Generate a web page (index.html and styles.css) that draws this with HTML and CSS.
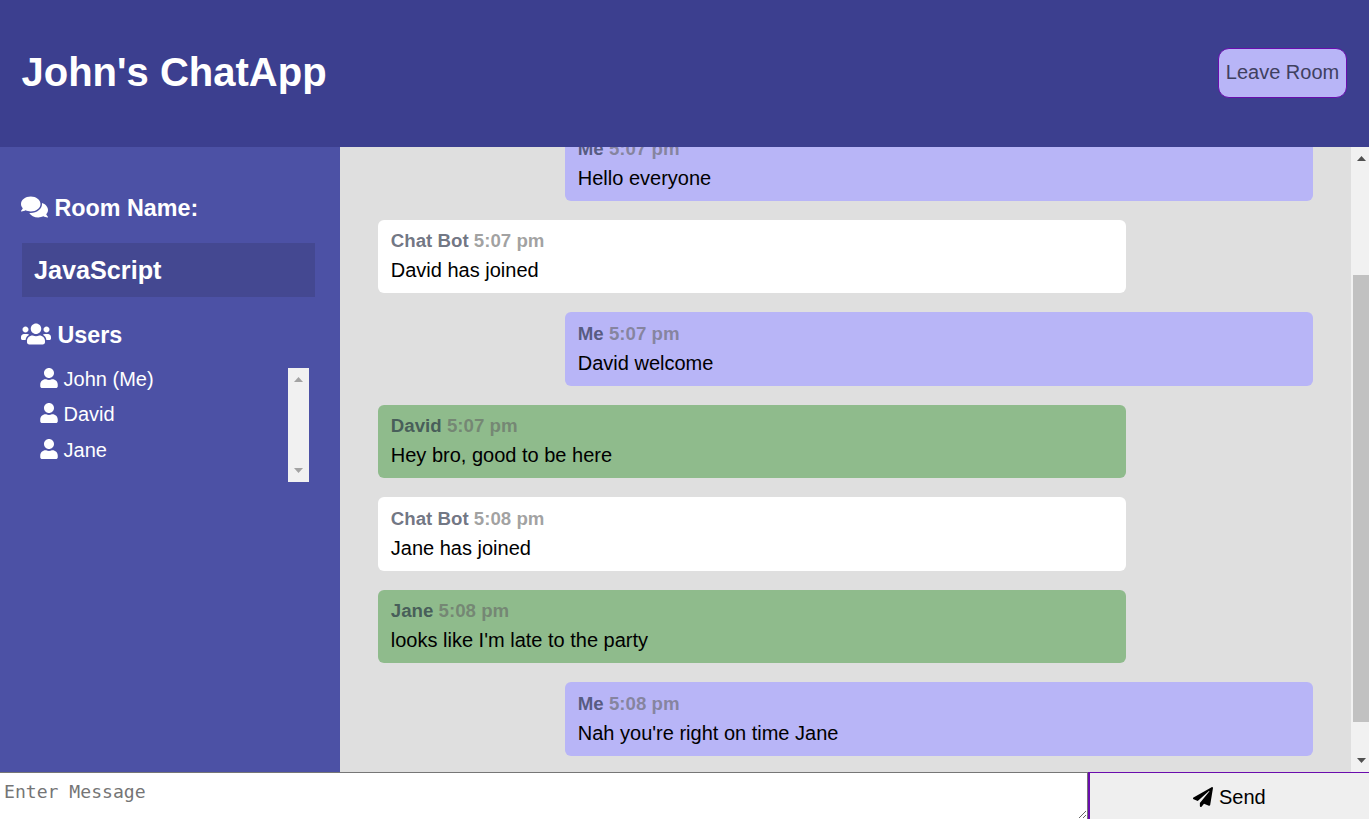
FILE: index.html
```html
<!DOCTYPE html>
<html lang="en">
<head>
<meta charset="utf-8">
<title>John's ChatApp</title>
<link rel="stylesheet" href="styles.css">
</head>
<body>
<div class="app">
  <header class="topbar">
    <h1 class="brand">John's ChatApp</h1>
    <button class="leave" type="button">Leave Room</button>
  </header>
  <main class="middle">
    <aside class="sidebar">
      <h3 class="side-title room-title"><svg class="ic ic-comments" viewBox="0 0 576 512"><path d="M416 192c0-88.4-93.1-160-208-160S0 103.6 0 192c0 34.3 14.1 65.9 38 92-13.4 30.2-35.5 54.2-35.8 54.5-2.2 2.3-2.8 5.7-1.5 8.7S4.8 352 8 352c36.6 0 66.9-12.3 88.7-25 32.2 15.7 70.3 25 111.3 25 114.9 0 208-71.6 208-160zm122 220c23.9-26 38-57.7 38-92 0-66.9-53.5-124.2-129.3-148.1.9 6.6 1.3 13.3 1.3 20.1 0 105.9-107.7 192-240 192-10.8 0-21.3-.8-31.7-1.9C207.8 439.6 281.8 480 368 480c41 0 79.1-9.2 111.3-25 21.8 12.7 52.1 25 88.7 25 3.2 0 6.1-1.9 7.3-4.8 1.3-2.9.7-6.3-1.5-8.7-.3-.3-22.4-24.2-35.8-54.5z"/></svg> Room Name:</h3>
      <div class="room-name">JavaScript</div>
      <h3 class="side-title users-title"><svg class="ic ic-users" viewBox="0 0 640 512"><path d="M96 224c35.3 0 64-28.7 64-64s-28.7-64-64-64-64 28.7-64 64 28.7 64 64 64zm448 0c35.3 0 64-28.7 64-64s-28.7-64-64-64-64 28.7-64 64 28.7 64 64 64zm32 32h-64c-17.6 0-33.5 7.1-45.1 18.6 40.3 22.1 68.9 62 75.1 109.4h66c17.7 0 32-14.3 32-32v-32c0-35.3-28.7-64-64-64zm-256 0c61.9 0 112-50.1 112-112S381.9 32 320 32 208 82.1 208 144s50.1 112 112 112zm76.8 32h-8.3c-20.8 10-43.9 16-68.5 16s-47.6-6-68.5-16h-8.3C179.6 288 128 339.6 128 403.2V432c0 26.5 21.5 48 48 48h288c26.5 0 48-21.5 48-48v-28.8c0-63.6-51.6-115.2-115.2-115.2zm-223.7-13.4C161.5 263.1 145.6 256 128 256H64c-35.3 0-64 28.7-64 64v32c0 17.7 14.3 32 32 32h65.9c6.3-47.4 34.9-87.3 75.2-109.4z"/></svg> Users</h3>
      <div class="users-box">
        <ul class="users">
          <li class="user"><svg class="ic ic-user" viewBox="0 0 448 512"><path d="M224 256c70.7 0 128-57.3 128-128S294.7 0 224 0 96 57.3 96 128s57.3 128 128 128zm89.6 32h-16.7c-22.2 10.2-46.9 16-72.9 16s-50.6-5.8-72.9-16h-16.7C60.2 288 0 348.2 0 422.4V464c0 26.5 21.5 48 48 48h352c26.5 0 48-21.5 48-48v-41.6c0-74.2-60.2-134.4-134.4-134.4z"/></svg> John (Me)</li>
          <li class="user"><svg class="ic ic-user" viewBox="0 0 448 512"><path d="M224 256c70.7 0 128-57.3 128-128S294.7 0 224 0 96 57.3 96 128s57.3 128 128 128zm89.6 32h-16.7c-22.2 10.2-46.9 16-72.9 16s-50.6-5.8-72.9-16h-16.7C60.2 288 0 348.2 0 422.4V464c0 26.5 21.5 48 48 48h352c26.5 0 48-21.5 48-48v-41.6c0-74.2-60.2-134.4-134.4-134.4z"/></svg> David</li>
          <li class="user"><svg class="ic ic-user" viewBox="0 0 448 512"><path d="M224 256c70.7 0 128-57.3 128-128S294.7 0 224 0 96 57.3 96 128s57.3 128 128 128zm89.6 32h-16.7c-22.2 10.2-46.9 16-72.9 16s-50.6-5.8-72.9-16h-16.7C60.2 288 0 348.2 0 422.4V464c0 26.5 21.5 48 48 48h352c26.5 0 48-21.5 48-48v-41.6c0-74.2-60.2-134.4-134.4-134.4z"/></svg> Jane</li>
        </ul>
        <div class="scrollbar bar-list">
          <span class="sb-btn"><svg class="arrow" viewBox="0 0 9 5"><path d="M4.5 0L9 5H0z"/></svg></span>
          <span class="sb-btn"><svg class="arrow" viewBox="0 0 9 5"><path d="M0 0H9L4.5 5z"/></svg></span>
        </div>
      </div>
    </aside>
    <section class="messages" id="messages">
      <article class="msg bot"><p class="meta"><span class="who">Chat Bot</span> <span class="when">5:07 pm</span></p><p class="text">Welcome to ChatApp</p></article>
      <article class="msg me"><p class="meta"><span class="who">Me</span> <span class="when">5:07 pm</span></p><p class="text">Hello everyone</p></article>
      <article class="msg bot"><p class="meta"><span class="who">Chat Bot</span> <span class="when">5:07 pm</span></p><p class="text">David has joined</p></article>
      <article class="msg me"><p class="meta"><span class="who">Me</span> <span class="when">5:07 pm</span></p><p class="text">David welcome</p></article>
      <article class="msg other"><p class="meta"><span class="who">David</span> <span class="when">5:07 pm</span></p><p class="text">Hey bro, good to be here</p></article>
      <article class="msg bot"><p class="meta"><span class="who">Chat Bot</span> <span class="when">5:08 pm</span></p><p class="text">Jane has joined</p></article>
      <article class="msg other"><p class="meta"><span class="who">Jane</span> <span class="when">5:08 pm</span></p><p class="text">looks like I'm late to the party</p></article>
      <article class="msg me"><p class="meta"><span class="who">Me</span> <span class="when">5:08 pm</span></p><p class="text">Nah you're right on time Jane</p></article>
    </section>
    <div class="scrollbar bar-main">
      <span class="sb-btn"><svg class="arrow" viewBox="0 0 9 5"><path d="M4.5 0L9 5H0z"/></svg></span>
      <span class="thumb"></span>
      <span class="sb-btn"><svg class="arrow" viewBox="0 0 9 5"><path d="M0 0H9L4.5 5z"/></svg></span>
    </div>
  </main>
  <form class="composer">
    <textarea class="input" placeholder="Enter Message"></textarea>
    <button class="send" type="button"><svg class="ic ic-plane" viewBox="0 0 512 512"><path d="M476 3.2L12.5 270.6c-18.1 10.4-15.8 35.6 2.2 43.2L121 358.4l287.3-253.2c5.5-4.9 13.3 2.6 8.6 8.3L176 407v80.5c0 23.6 28.5 32.9 42.5 15.8L282 426l124.6 52.2c14.2 6 30.4-2.9 33-18.2l72-432C515 7.8 493.3-6.8 476 3.2z"/></svg> Send</button>
  </form>
</div>
<script src="script.js"></script>
</body>
</html>
```
FILE: styles.css
```css
* { box-sizing: border-box; }
html, body { margin: 0; height: 100%; overflow: hidden; }
body { font-family: "Liberation Sans", Arial, sans-serif; font-size: 20px; color: #000; }
.app { display: flex; flex-direction: column; height: 100vh; }

.topbar { flex: 0 0 147px; display: flex; align-items: center; justify-content: space-between; padding: 0 22px 0 21.5px; background: #3c3f8f; color: #fff; }
.brand { margin: 0 0 4px; font-size: 40px; line-height: 48px; font-weight: 700; }
.leave { width: 129px; height: 50px; margin-bottom: 1px; padding: 0 0 2px; font: 20px "Liberation Sans", Arial, sans-serif; color: #3f4060; background: #b8b5f7; border: 1px solid #6a0dad; border-radius: 11px; }

.middle { flex: 1 1 0; min-height: 0; display: flex; }
.sidebar { flex: 0 0 340px; padding: 47px 25px 0 22px; background: #4c51a5; color: #fff; }
.side-title { margin: 0; font-size: 23.3px; line-height: 28px; font-weight: 700; }
.ic { fill: currentColor; display: inline-block; }
.ic-comments { width: 27px; height: 24px; vertical-align: -3px; margin-left: -1px; }
.ic-users { width: 30px; height: 24px; vertical-align: -3px; margin-left: -1px; }
.ic-user { width: 18px; height: 20px; vertical-align: -2px; }
.ic-plane { width: 20px; height: 20px; vertical-align: -3px; }
.room-name { height: 54px; margin-top: 21px; padding-left: 12px; background: #444891; font-size: 25.2px; line-height: 54px; font-weight: 700; }
.users-title { margin-top: 24px; }
.users-box { display: flex; width: 287px; height: 114px; margin-top: 19px; }
.users { flex: 1 1 0; list-style: none; margin: 0; padding: 0 0 0 18px; line-height: 23px; }
.user { margin-bottom: 12.4px; white-space: nowrap; }

.scrollbar { display: flex; flex-direction: column; justify-content: space-between; background: #f1f1f1; }
.sb-btn { display: flex; align-items: center; justify-content: center; height: 23px; }
.arrow { display: block; width: 9px; height: 5px; }
.bar-list { flex: 0 0 21px; }
.bar-list .arrow { fill: #a3a3a3; }
.bar-main { flex: 0 0 18px; }
.bar-main .sb-btn { padding-left: 3px; }
.bar-main .arrow { fill: #505050; }
.thumb { height: 447px; margin: 105px 0 auto 2px; background: #c1c1c1; }

.messages { flex: 1 1 0; min-width: 0; padding: 42.9px 38px 62px; overflow: hidden; background: #dfdfdf; }
.msg { width: 80%; height: 73.5px; margin-bottom: 19px; padding: 9.6px 12.8px 0; border-radius: 6px; }
.msg:last-child { margin-bottom: 0; }
.me { margin-left: auto; background: #b8b5f7; }
.bot { background: #fff; }
.other { background: #8fbb8c; }
.meta { margin: 0; font-size: 18.7px; line-height: 23px; font-weight: 700; }
.who { color: rgba(30, 40, 60, .65); }
.when { color: rgba(100, 100, 100, .6); }
.text { margin: 6.7px 0 0; line-height: 23px; }

.composer { flex: 0 0 47px; display: flex; }
.input { flex: 0 0 1088px; height: 47px; margin: 0; padding: 8px 4px; border: 1px solid #767676; border-bottom: 0; border-left: 0; font: 18.1px "DejaVu Sans Mono", monospace; color: #000; background: #fff; outline: 0; }
.input::placeholder { color: #757575; }
.send { flex: 1 1 0; margin: 0; padding: 2px 0 0; font: 20px "Liberation Sans", Arial, sans-serif; color: #000; background: #efefef; border: 0; border-top: 1px solid #6a0dad; border-left: 2px solid #6a0dad; }
```
FILE: script.js
```js
document.getElementById('messages').scrollTop = 155;
```
